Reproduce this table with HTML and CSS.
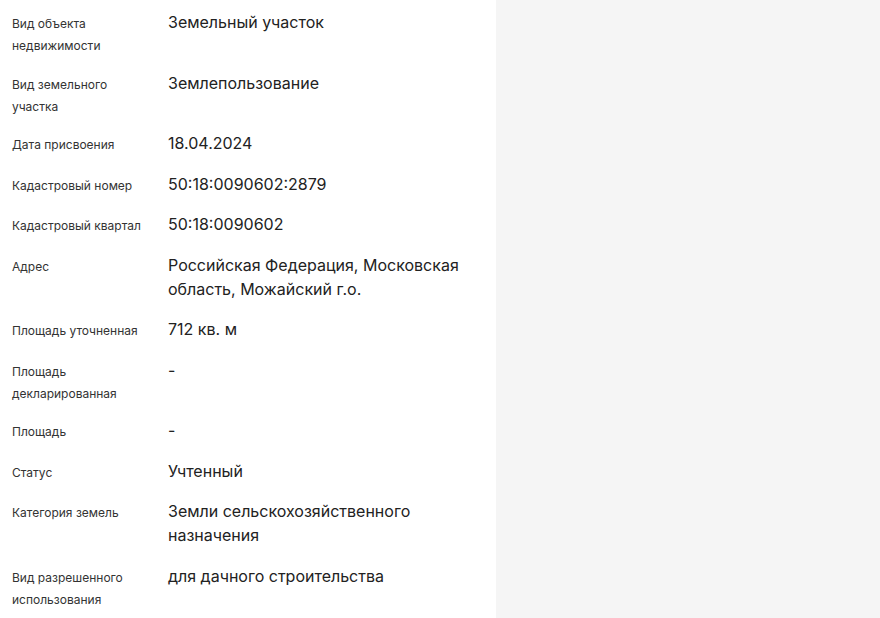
FILE: index.html
```html
<!DOCTYPE html>
<html lang="ru">
<head>
    <meta charset="UTF-8">
    <meta name="viewport" content="width=device-width, initial-scale=1.0">
    <title>Сведения об объекте</title>
    <link rel="stylesheet" href="styles.css">
</head>
<body>
    <div class="page">
        <div class="panel">
            <div class="row">
                <div class="label">Вид объекта недвижимости</div>
                <div class="value">Земельный участок</div>
            </div>
            <div class="row">
                <div class="label">Вид земельного участка</div>
                <div class="value">Землепользование</div>
            </div>
            <div class="row">
                <div class="label">Дата присвоения</div>
                <div class="value">18.04.2024</div>
            </div>
            <div class="row">
                <div class="label">Кадастровый номер</div>
                <div class="value">50:18:0090602:2879</div>
            </div>
            <div class="row">
                <div class="label">Кадастровый квартал</div>
                <div class="value">50:18:0090602</div>
            </div>
            <div class="row">
                <div class="label">Адрес</div>
                <div class="value">Российская Федерация, Московская область, Можайский г.о.</div>
            </div>
            <div class="row">
                <div class="label">Площадь уточненная</div>
                <div class="value">712 кв. м</div>
            </div>
            <div class="row">
                <div class="label">Площадь декларированная</div>
                <div class="value">-</div>
            </div>
            <div class="row">
                <div class="label">Площадь</div>
                <div class="value">-</div>
            </div>
            <div class="row">
                <div class="label">Статус</div>
                <div class="value">Учтенный</div>
            </div>
            <div class="row">
                <div class="label">Категория земель</div>
                <div class="value">Земли сельскохозяйственного назначения</div>
            </div>
            <div class="row">
                <div class="label">Вид разрешенного использования</div>
                <div class="value">для дачного строительства</div>
            </div>
        </div>
        <div class="side"></div>
    </div>
</body>
</html>
```

FILE: styles.css
```css
body {
    margin: 0;
    font-family: Inter, "Noto Sans", sans-serif;
    color: #222;
    background-color: #f5f5f5;
}

.page {
    display: flex;
    min-height: 618px;
}

.panel {
    width: 496px;
    box-sizing: border-box;
    padding: 10px 12px 0 12px;
    background-color: #fff;
}

.row {
    display: flex;
    align-items: flex-start;
    gap: 20px;
    padding-bottom: 16.5px;
}

.label {
    width: 136px;
    flex-shrink: 0;
    padding-top: 3px;
    margin-bottom: -3px;
    font-size: 12px;
    line-height: 22px;
    color: #333;
}

.value {
    flex: 1;
    font-size: 16px;
    line-height: 24px;
    color: #222;
}

.side {
    flex: 1;
}
```
